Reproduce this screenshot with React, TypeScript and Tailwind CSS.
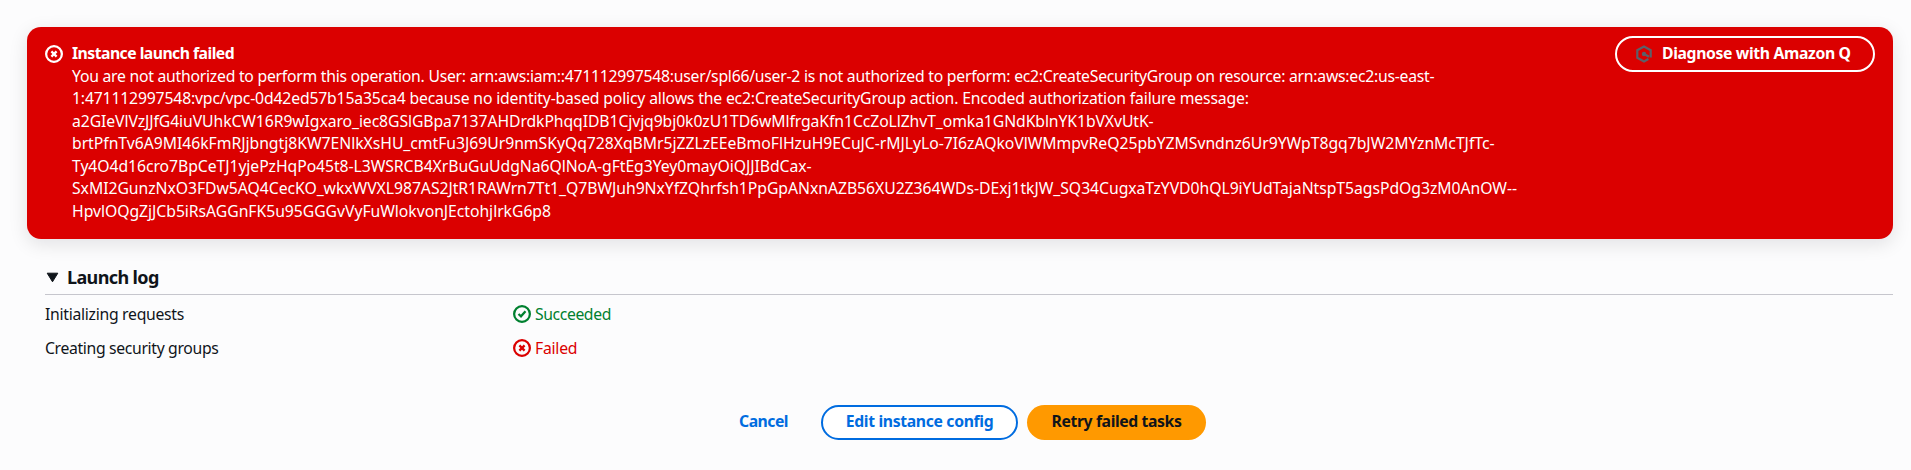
const MESSAGE_LINES = [
  {
    text: "You are not authorized to perform this operation. User: arn:aws:iam::471112997548:user/spl66/user-2 is not authorized to perform: ec2:CreateSecurityGroup on resource: arn:aws:ec2:us-east-",
    tracking: "tracking-[-0.25px]",
  },
  {
    text: "1:471112997548:vpc/vpc-0d42ed57b15a35ca4 because no identity-based policy allows the ec2:CreateSecurityGroup action. Encoded authorization failure message:",
    tracking: "tracking-[-0.168px]",
  },
  {
    text: "a2GIeVlVzJJfG4iuVUhkCW16R9wIgxaro_iec8GSlGBpa7137AHDrdkPhqqIDB1Cjvjq9bj0k0zU1TD6wMlfrgaKfn1CcZoLlZhvT_omka1GNdKblnYK1bVXvUtK-",
    tracking: "tracking-[-0.092px]",
  },
  {
    text: "brtPfnTv6A9MI46kFmRJjbngtj8KW7ENlkXsHU_cmtFu3J69Ur9nmSKyQq728XqBMr5jZZLzEEeBmoFlHzuH9ECuJC-rMJLyLo-7I6zAQkoVlWMmpvReQ25pbYZMSvndnz6Ur9YWpT8gq7bJW2MYznMcTJfTc-",
    tracking: "tracking-[-0.033px]",
  },
  {
    text: "Ty4O4d16cro7BpCeTJ1yjePzHqPo45t8-L3WSRCB4XrBuGuUdgNa6QlNoA-gFtEg3Yey0mayOiQJJIBdCax-",
    tracking: "tracking-[-0.065px]",
  },
  {
    text: "SxMI2GunzNxO3FDw5AQ4CecKO_wkxWVXL987AS2JtR1RAWrn7Tt1_Q7BWJuh9NxYfZQhrfsh1PpGpANxnAZB56XU2Z364WDs-DExj1tkJW_SQ34CugxaTzYVD0hQL9iYUdTajaNtspT5agsPdOg3zM0AnOW--",
    tracking: "tracking-[-0.046px]",
  },
  {
    text: "HpvlOQgZjJCb5iRsAGGnFK5u95GGGvVyFuWlokvonJEctohjlrkG6p8",
    tracking: "tracking-[-0.044px]",
  },
];

function ErrorIcon() {
  return (
    <svg viewBox="0 0 16 16" className="size-[18px] shrink-0" fill="none" stroke="currentColor" strokeWidth="2">
      <circle cx="8" cy="8" r="7" />
      <path d="m10.3 5.7-4.6 4.6M10.3 10.3 5.7 5.7" />
    </svg>
  );
}

function SuccessIcon() {
  return (
    <svg viewBox="0 0 16 16" className="size-[18px] shrink-0" fill="none" stroke="currentColor" strokeWidth="2">
      <circle cx="8" cy="8" r="7" />
      <path d="m4.9 8 2.2 2.1 4-4.5" />
    </svg>
  );
}

function AmazonQIcon() {
  return (
    <svg viewBox="0 0 16 18" className="h-[18px] w-4 shrink-0 text-[#5c5f69]" fill="none" stroke="currentColor" strokeWidth="2.2">
      <path d="M12.4 14 8 16.5 1.3 12.8V5.2L8 1.5l6.7 3.7v7.4" />
      <path d="m8.6 9.2 4.4 2.5" strokeWidth="2.4" />
      <circle cx="8" cy="9" r="2.2" fill="currentColor" stroke="none" />
    </svg>
  );
}

function FlashError() {
  return (
    <section className="flex h-[212px] justify-between rounded-[14px] bg-[#db0000] pl-[18px] pr-[18px] text-white shadow-[0_5px_18px_1px_rgba(0,7,22,0.10)]">
      <div className="flex gap-[9px] pt-[15px]">
        <div className="pt-[3px]">
          <ErrorIcon />
        </div>
        <div className="whitespace-nowrap">
          <h2 className="font-bold tracking-[-0.53px]">Instance launch failed</h2>
          {MESSAGE_LINES.map((line) => (
            <p key={line.text} className={line.tracking}>
              {line.text}
            </p>
          ))}
        </div>
      </div>
      <button className="mt-[9px] flex h-9 w-[260px] items-center gap-[10px] rounded-full border-2 border-white pl-[19px] font-bold tracking-[-0.36px] whitespace-nowrap">
        <AmazonQIcon />
        <span className="pb-px">Diagnose with Amazon Q</span>
      </button>
    </section>
  );
}

function LaunchLog() {
  return (
    <section className="mt-[26px] pl-[18px]">
      <h3 className="flex h-[30px] items-center gap-2 border-b border-[#c6c6cd] pb-[4px] pl-px">
        <svg viewBox="0 0 13 11" className="h-[11px] w-[13px]" fill="#0f141a" stroke="#0f141a" strokeLinejoin="round">
          <path d="M1.2 1.2h10.6L6.5 9.8z" />
        </svg>
        <span className="text-[18px] font-bold tracking-[-0.62px]">Launch log</span>
      </h3>
      <dl className="grid grid-cols-[468px_1fr] gap-y-[11px] pt-2">
        <dt className="tracking-[-0.285px]">Initializing requests</dt>
        <dd className="flex items-center gap-1 tracking-[-0.4px] text-[#00802f]">
          <SuccessIcon />
          Succeeded
        </dd>
        <dt className="tracking-[-0.34px]">Creating security groups</dt>
        <dd className="flex items-center gap-1 tracking-[-0.25px] text-[#db0000]">
          <ErrorIcon />
          Failed
        </dd>
      </dl>
    </section>
  );
}

function Actions() {
  return (
    <footer className="mt-[46px] flex h-[35px] items-stretch pl-[690px] font-bold whitespace-nowrap">
      <button className="w-[95px] pr-[2px] pb-[2px] text-center tracking-[-0.52px] text-[#006ce0]">Cancel</button>
      <button className="ml-[9px] w-[197px] rounded-full border-2 border-[#006ce0] bg-white pb-[2px] tracking-[-0.34px] text-[#006ce0]">
        Edit instance config
      </button>
      <button className="ml-[9px] w-[179px] rounded-full bg-[#ff9900] pb-[2px] tracking-[-0.39px] text-[#0f141a]">
        Retry failed tasks
      </button>
    </footer>
  );
}

export default function App() {
  return (
    <main className="h-[470px] overflow-hidden bg-[#fcfcfd] pt-[27px] pr-[18px] pl-[27px] font-['Noto_Sans','Open_Sans',sans-serif] text-[15.75px] leading-[22.5px] text-[#0f141a]">
      <FlashError />
      <LaunchLog />
      <Actions />
    </main>
  );
}
